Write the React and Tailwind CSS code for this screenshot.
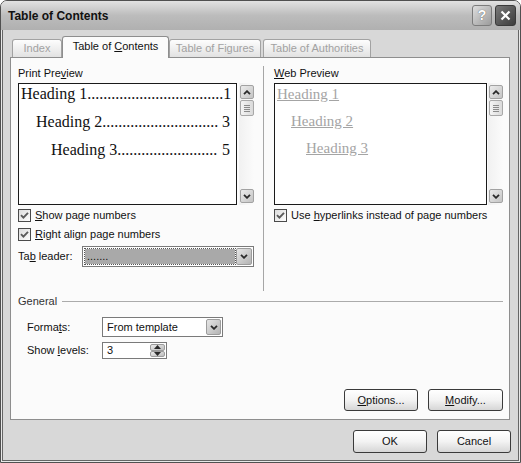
import React from "react";

function Chevron({ up = false, color = "#2a2a2a" }) {
    return (
        <svg width="8" height="5" viewBox="0 0 8 5">
            <path
                d={up ? "M1 4.2 L4 1.2 L7 4.2" : "M1 0.8 L4 3.8 L7 0.8"}
                fill="none"
                stroke={color}
                strokeWidth="1.8"
            />
        </svg>
    );
}

function Check() {
    return (
        <span className="flex h-[13px] w-[13px] shrink-0 items-center justify-center border border-[#4a4a4a] bg-linear-to-br from-[#dcdcdc] to-[#fdfdfd]">
            <svg width="9" height="9" viewBox="0 0 9 9">
                <path d="M1 4.2 L3.4 6.6 L8 1.8" fill="none" stroke="#5a5a5a" strokeWidth="1.9" />
            </svg>
        </span>
    );
}

function ScrollButton({ up }) {
    return (
        <div className="flex h-[14px] w-[14px] items-center justify-center rounded-[2px] border border-[#a2a2a2] bg-linear-to-br from-[#ececec] to-[#c4c4c4]">
            <Chevron up={up} />
        </div>
    );
}

function ScrollBar() {
    return (
        <div className="flex h-full w-[15px] flex-col items-center bg-linear-to-r from-[#f1f1f1] to-[#fbfbfb] py-[2px]">
            <ScrollButton up />
            <div className="mt-px flex h-[16px] w-[14px] flex-col items-center justify-center gap-px rounded-[2px] border border-[#a8a8a8] bg-linear-to-r from-[#f4f4f4] to-[#dadada]">
                <span className="h-px w-[6px] bg-[#8a8a8a]" />
                <span className="h-px w-[6px] bg-[#8a8a8a]" />
                <span className="h-px w-[6px] bg-[#8a8a8a]" />
                <span className="h-px w-[6px] bg-[#8a8a8a]" />
            </div>
            <div className="flex-1" />
            <ScrollButton />
        </div>
    );
}

function ArrowButton({ className }) {
    return (
        <div className={`flex h-full items-center justify-center rounded-[2px] border border-[#9c9c9c] bg-linear-to-br from-[#e6e6e6] to-[#b4b4b4] ${className}`}>
            <Chevron />
        </div>
    );
}

function Button({ children, className }) {
    return (
        <div className={`flex items-center justify-center rounded-[3px] border border-[#3a3a3a] bg-linear-to-b from-[#ffffff] via-[#f3f3f3] to-[#d6d6d6] text-[#111] ${className}`}>
            {children}
        </div>
    );
}

function Leader({ indent, label, dots, page }) {
    return (
        <div className="flex justify-between leading-[20px]" style={{ paddingLeft: indent }}>
            <span className="whitespace-nowrap">
                {label}
                {dots}
            </span>
            <span>{page}</span>
        </div>
    );
}

function Tab({ children, className }) {
    return (
        <div className={`flex h-[18px] items-center justify-center rounded-t-[3px] border border-b-0 border-[#a2a2a2] bg-linear-to-b from-[#fdfdfd] to-[#e2e2e2] text-[#a2a2a2] ${className}`}>
            <span>{children}</span>
        </div>
    );
}

export default function App() {
    return (
        <div className="flex h-[463px] w-[521px] flex-col overflow-hidden rounded-t-[7px] border border-[#505050] bg-[#e8e8e8] font-['Liberation_Sans',Arial,sans-serif] text-[11px] text-[#111]">
            {/* title bar */}
            <div className="flex h-[29px] shrink-0 items-center bg-linear-to-b from-[#e2e2e2] via-[#bcbcbc] to-[#b0b0b0] pl-[7px] pr-[4px]">
                <span className="flex-1 text-[12px] font-bold text-[#111]">Table of Contents</span>
                <div className="flex gap-[3px]">
                    <div className="flex h-[21px] w-[20px] items-center justify-center rounded-[3px] border border-[#7c7c7c] bg-linear-to-br from-[#dedede] to-[#9c9c9c] text-[14px] font-bold text-white [text-shadow:0_0_1px_#444]">
                        ?
                    </div>
                    <div className="flex h-[21px] w-[21px] items-center justify-center rounded-[3px] border border-[#3a3a3a] bg-linear-to-br from-[#7a7a7a] to-[#3c3c3c]">
                        <svg width="11" height="11" viewBox="0 0 11 11">
                            <path d="M1.5 1.5 L9.5 9.5 M9.5 1.5 L1.5 9.5" stroke="#fff" strokeWidth="2.2" />
                        </svg>
                    </div>
                </div>
            </div>

            {/* body */}
            <div className="mx-px mb-px flex flex-1 flex-col border-x border-b border-[#666] bg-[#d8d8d8] pl-[7px] pt-[6px]">
                {/* tabs */}
                <div className="flex h-[21px] items-end">
                    <Tab className="ml-[2px] w-[50px]">Index</Tab>
                    <div className="relative z-10 -mb-px flex h-[22px] w-[107px] items-center justify-center rounded-t-[3px] border border-b-0 border-[#8e8e8e] bg-[#fbfbfb] pb-[2px] text-[#111]">
                        <span>
                            Table of <u>C</u>ontents
                        </span>
                    </div>
                    <Tab className="w-[92px]">Table of Figures</Tab>
                    <Tab className="ml-[2px] w-[108px]">Table of Authorities</Tab>
                </div>

                {/* panel */}
                <div className="flex h-[363px] w-[500px] flex-col border border-[#8e8e8e] bg-[#fbfbfb] pl-[7px] pr-[6px]">
                    <div className="mt-[8px] flex h-[225px]">
                        {/* print preview */}
                        <div className="flex w-[236px] flex-col pt-px">
                            <div className="h-[13px] leading-[13px]">
                                Print Pre<u>v</u>iew
                            </div>
                            <div className="mt-[3px] flex h-[122px]">
                                <div className="w-[219px] border border-[#1a1a1a] bg-white pl-[2px] pr-[6px] font-['Liberation_Serif',serif] text-[16px] text-[#111]">
                                    <div className="flex flex-col gap-[8px]">
                                        <Leader indent={0} label="Heading 1" dots=".................................." page="1" />
                                        <Leader indent={15} label="Heading 2" dots="............................." page="3" />
                                        <Leader indent={30} label="Heading 3" dots="........................." page="5" />
                                    </div>
                                </div>
                                <div className="ml-[2px] h-full">
                                    <ScrollBar />
                                </div>
                            </div>
                            <div className="mt-[4px] flex h-[13px] items-center gap-[4px]">
                                <Check />
                                <span>
                                    <u>S</u>how page numbers
                                </span>
                            </div>
                            <div className="mt-[6px] flex h-[13px] items-center gap-[4px]">
                                <Check />
                                <span>
                                    <u>R</u>ight align page numbers
                                </span>
                            </div>
                            <div className="mt-[5px] flex h-[21px] items-center">
                                <span className="w-[64px]">
                                    Ta<u>b</u> leader:
                                </span>
                                <div className="flex h-[21px] w-[172px] border border-[#7a7a7a] bg-white p-px">
                                    <div className="m-px flex flex-1 items-center bg-[#a9a9a9] pl-[2px] outline-1 outline-dotted outline-[#555]">
                                        .......
                                    </div>
                                    <ArrowButton className="w-[16px]" />
                                </div>
                            </div>
                        </div>

                        <div className="ml-[9px] mr-[10px] w-px bg-[#a6a6a6]" />

                        {/* web preview */}
                        <div className="flex w-[229px] flex-col pt-px">
                            <div className="h-[13px] leading-[13px]">
                                <u>W</u>eb Preview
                            </div>
                            <div className="mt-[3px] flex h-[122px]">
                                <div className="w-[213px] border border-[#1a1a1a] bg-white pl-[2px] font-['Liberation_Serif',serif] text-[15px] text-[#a4a4a4]">
                                    <div className="flex flex-col gap-[7px] leading-[20px]">
                                        <span className="underline">Heading 1</span>
                                        <span className="pl-[14px]">
                                            <span className="underline">Heading 2</span>
                                        </span>
                                        <span className="pl-[29px]">
                                            <span className="underline">Heading 3</span>
                                        </span>
                                    </div>
                                </div>
                                <div className="ml-px h-full">
                                    <ScrollBar />
                                </div>
                            </div>
                            <div className="mt-[4px] flex h-[13px] items-center gap-[4px]">
                                <Check />
                                <span>
                                    Use <u>h</u>yperlinks instead of page numbers
                                </span>
                            </div>
                        </div>
                    </div>

                    {/* general */}
                    <div className="mt-[4px] flex h-[13px] items-center">
                        <span className="text-[#333]">General</span>
                        <span className="ml-[5px] h-px flex-1 bg-[#ababab]" />
                    </div>
                    <div className="mt-[9px] flex h-[20px] items-center pl-[9px]">
                        <span className="w-[75px]">
                            Forma<u>t</u>s:
                        </span>
                        <div className="flex h-[20px] w-[121px] border border-[#7a7a7a] bg-white p-px">
                            <div className="flex flex-1 items-center pl-[3px]">From template</div>
                            <ArrowButton className="w-[15px]" />
                        </div>
                    </div>
                    <div className="mt-[5px] flex h-[17px] items-center pl-[9px]">
                        <span className="w-[75px]">
                            Show <u>l</u>evels:
                        </span>
                        <div className="flex h-[17px] w-[65px] border border-[#7a7a7a] bg-white p-px">
                            <div className="flex flex-1 items-center pl-[3px]">3</div>
                            <div className="flex w-[15px] flex-col">
                                <div className="flex flex-1 items-center justify-center rounded-[2px] border border-[#9c9c9c] bg-linear-to-br from-[#ececec] to-[#bcbcbc]">
                                    <svg width="7" height="4" viewBox="0 0 7 4">
                                        <path d="M0 4 L3.5 0 L7 4 Z" fill="#2a2a2a" />
                                    </svg>
                                </div>
                                <div className="flex flex-1 items-center justify-center rounded-[2px] border border-[#9c9c9c] bg-linear-to-br from-[#ececec] to-[#bcbcbc]">
                                    <svg width="7" height="4" viewBox="0 0 7 4">
                                        <path d="M0 0 L3.5 4 L7 0 Z" fill="#2a2a2a" />
                                    </svg>
                                </div>
                            </div>
                        </div>
                    </div>

                    <div className="mt-auto flex justify-end gap-[10px] pb-[8px]">
                        <Button className="h-[22px] w-[74px]">
                            <span>
                                <u>O</u>ptions...
                            </span>
                        </Button>
                        <Button className="h-[22px] w-[75px]">
                            <span>
                                <u>M</u>odify...
                            </span>
                        </Button>
                    </div>
                </div>

                {/* dialog buttons */}
                <div className="mt-[10px] flex justify-end gap-[10px] pr-[7px]">
                    <Button className="h-[23px] w-[74px]">OK</Button>
                    <Button className="h-[23px] w-[74px]">Cancel</Button>
                </div>
            </div>
        </div>
    );
}
